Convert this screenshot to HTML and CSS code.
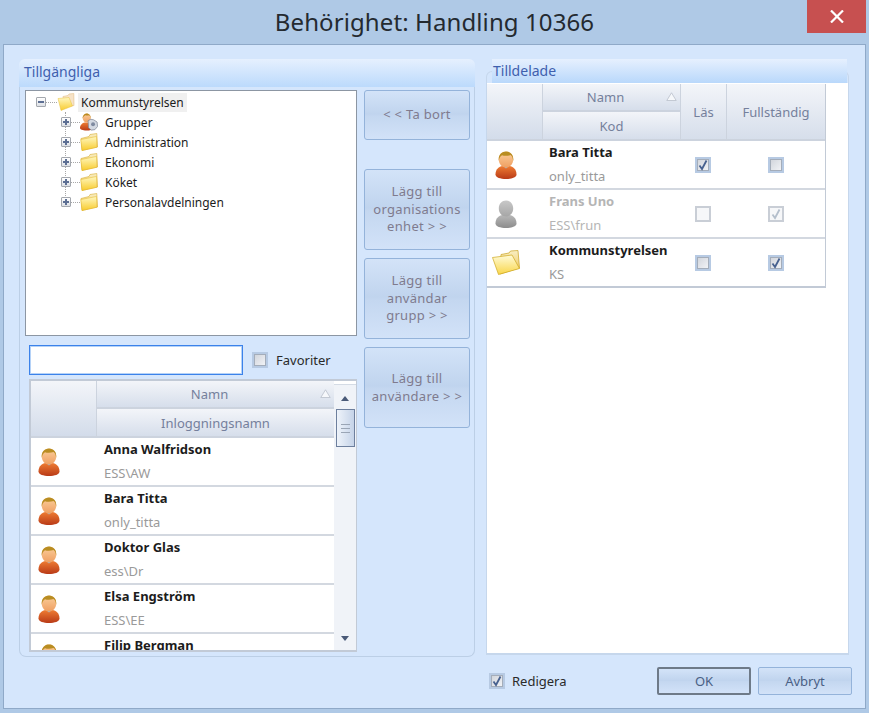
FILE: index.html
```html
<!DOCTYPE html>
<html lang="sv">
<head>
  <meta charset="UTF-8">
  <title>Behörighet: Handling 10366</title>
  <link rel="stylesheet" href="styles.css">
</head>
<body>
  <svg class="defs" width="0" height="0" aria-hidden="true">
    <defs>
      <linearGradient id="skin" x1="0" y1="0" x2="0" y2="1"><stop offset="0" stop-color="#fbcf9c"/><stop offset="1" stop-color="#ef9f62"/></linearGradient>
      <linearGradient id="shirt" x1="0" y1="0" x2="0" y2="1"><stop offset="0" stop-color="#ee7c33"/><stop offset="1" stop-color="#b93a17"/></linearGradient>
      <linearGradient id="greyhead" x1="0" y1="0" x2="0" y2="1"><stop offset="0" stop-color="#c8c8c8"/><stop offset="1" stop-color="#a6a6a6"/></linearGradient>
      <linearGradient id="greybody" x1="0" y1="0" x2="0" y2="1"><stop offset="0" stop-color="#b8b8b8"/><stop offset="1" stop-color="#8c8c8c"/></linearGradient>
      <linearGradient id="fold" x1="0" y1="0" x2="0" y2="1"><stop offset="0" stop-color="#fff8c0"/><stop offset="1" stop-color="#f8cb2e"/></linearGradient>
      <linearGradient id="foldside" x1="0" y1="0" x2="0" y2="1"><stop offset="0" stop-color="#fffbd8"/><stop offset="1" stop-color="#f9d64a"/></linearGradient>
      <linearGradient id="foldback" x1="0" y1="0" x2="0" y2="1"><stop offset="0" stop-color="#f9efc4"/><stop offset="1" stop-color="#ecc04a"/></linearGradient>
      <symbol id="person" viewBox="0 0 22 28">
        <path d="M.5 23.500C.5 18 4 15.500 7.500 15h7c3.500.5 7 3 7 8.500 0 3-5 4.500-10.500 4.500S.5 26.500.5 23.500z" fill="url(#shirt)"/>
        <path d="M8 15l3 2.500 3-2.500v-1H8z" fill="#9db4c4"/>
        <path d="M3.800 8.500C3.800 3.500 7 .5 11 .5s7.200 3 7.200 8c0 4.500-3.200 8-7.200 8s-7.200-3.500-7.200-8z" fill="url(#skin)"/>
        <path d="M3.800 10C3 4 6.500.5 11 .5S19 4 18.200 10c-.4-3-1-5-2.700-6-2.500 1-6.500 1-8.500.2C5 5.200 4.200 7 3.800 10z" fill="#b98d22"/>
      </symbol>
      <symbol id="person-grey" viewBox="0 0 22 28">
        <path d="M.5 23.500C.5 18 4 15.500 7.500 15h7c3.500.5 7 3 7 8.500 0 3-5 4.500-10.500 4.500S.5 26.500.5 23.500z" fill="url(#greybody)"/>
        <path d="M3.800 8.500C3.800 3.500 7 .5 11 .5s7.200 3 7.200 8c0 4.500-3.200 8-7.200 8s-7.200-3.500-7.200-8z" fill="url(#greyhead)"/>
      </symbol>
      <symbol id="folder" viewBox="0 0 18 18">
        <path d="M1 5.500L9 3.500 10 1.500 16.800.5 17.500 14 2 17.500z" fill="url(#foldback)" stroke="#d9ad32" stroke-width=".6"/>
        <path d="M.8 6.500L16.500 3.500 17 14.200 2 17.500z" fill="url(#fold)" stroke="#e3b62e" stroke-width=".5"/>
      </symbol>
      <symbol id="folder-open" viewBox="0 0 18 18">
        <path d="M6 3.500L11 2.500 12 1 16.800.5 17 12.500 7 14z" fill="#f7e3c8" stroke="#e3c08a" stroke-width=".6"/>
        <path d="M1 5.500L12 4.500 15.500 13 4 17.500z" fill="url(#fold)" stroke="#e8c040" stroke-width=".5"/>
      </symbol>
      <symbol id="folder-large" viewBox="0 0 28 25">
        <path d="M9 4.500L17 3 18.500 1 26 .5 27.500 18 8 24z" fill="url(#foldback)" stroke="#c9a21e" stroke-width=".7"/>
        <path d="M.5 7.500L20 5 27.500 18.500 6.500 24.500z" fill="url(#foldside)" stroke="#cfa71f" stroke-width=".7"/>
      </symbol>
      <symbol id="group" viewBox="0 0 20 20">
        <path d="M0 16.500C0 13 3 11 5 10.500h5c3 .5 4 3 4 5.500 0 2.500-3 3.500-7 3.500s-7-1-7-3z" fill="url(#shirt)"/>
        <path d="M3 5.500C3 2.500 5 .5 7.500.5S12 2.500 12 5.500s-2 5-4.500 5S3 8.500 3 5.500z" fill="url(#skin)"/>
        <path d="M3 6C2.700 3 5 .5 7.500.5S12.300 3 12 6c-.5-2-1-3-2-3.500-1 .5-3 .5-4 0C5 3 3.500 4 3 6z" fill="#b98a20"/>
        <path d="M9 8.500l3-1.500 3 .5 4 2.500.5 5-3 3.500-4 .5-3-2.500z" fill="#d4d9e2" stroke="#7d8595" stroke-width=".8"/>
        <circle cx="14.500" cy="12.500" r="2.200" fill="#7f8aa0"/>
      </symbol>
      <symbol id="tick" viewBox="0 0 12 12">
        <path d="M2.500 6.500L5 10l4.500-8.500" fill="none" stroke="currentColor" stroke-width="1.800"/>
      </symbol>
      <symbol id="sort" viewBox="0 0 11 9">
        <path d="M5.500.8L10.200 8.500H.8z" fill="#f6f8fb" stroke="#b9bfca" stroke-width=".8"/>
      </symbol>
    </defs>
  </svg>

  <div class="window">
    <header class="titlebar">
      <span></span>
      <h1 class="title">Behörighet: Handling 10366</h1>
      <button class="close" aria-label="Stäng">
        <svg width="14" height="13" viewBox="0 0 14 13"><path d="M1 .5l12 12M13 .5l-12 12" stroke="#fff" stroke-width="2.200" fill="none"/></svg>
      </button>
    </header>

    <main class="panel">
      <div class="columns">
        <section class="group">
          <h2 class="group-head">Tillgängliga</h2>
          <div class="group-body">
            <div class="pickers">
              <div class="tree">
                <div class="tree-row tree-root">
                  <span class="expander minus"></span>
                  <span class="dots"></span>
                  <svg class="tree-icon"><use href="#folder-open"/></svg>
                  <span class="tree-label selected">Kommunstyrelsen</span>
                </div>
                <div class="tree-kids">
                  <div class="tree-row">
                    <span class="expander plus"></span>
                    <span class="dots"></span>
                    <svg class="tree-icon"><use href="#group"/></svg>
                    <span class="tree-label">Grupper</span>
                  </div>
                  <div class="tree-row">
                    <span class="expander plus"></span>
                    <span class="dots"></span>
                    <svg class="tree-icon"><use href="#folder"/></svg>
                    <span class="tree-label">Administration</span>
                  </div>
                  <div class="tree-row">
                    <span class="expander plus"></span>
                    <span class="dots"></span>
                    <svg class="tree-icon"><use href="#folder"/></svg>
                    <span class="tree-label">Ekonomi</span>
                  </div>
                  <div class="tree-row">
                    <span class="expander plus"></span>
                    <span class="dots"></span>
                    <svg class="tree-icon"><use href="#folder"/></svg>
                    <span class="tree-label">Köket</span>
                  </div>
                  <div class="tree-row">
                    <span class="expander plus"></span>
                    <span class="dots"></span>
                    <svg class="tree-icon"><use href="#folder"/></svg>
                    <span class="tree-label">Personalavdelningen</span>
                  </div>
                </div>
              </div>

              <div class="search-row">
                <input class="search" type="text">
                <span class="check"></span>
                <span class="search-label">Favoriter</span>
              </div>

              <div class="user-grid">
                <div class="user-main">
                  <div class="grid-head">
                    <div class="head-icon"></div>
                    <div class="head-cell sorted">Namn<svg class="sort-mark"><use href="#sort"/></svg></div>
                    <div class="head-cell">Inloggningsnamn</div>
                  </div>
                  <div class="user-list">
                    <div class="user-row">
                      <div class="icon-cell"><svg class="person"><use href="#person"/></svg></div>
                      <div class="text-cell"><b>Anna Walfridson</b><span>ESS\AW</span></div>
                    </div>
                    <div class="user-row">
                      <div class="icon-cell"><svg class="person"><use href="#person"/></svg></div>
                      <div class="text-cell"><b>Bara Titta</b><span>only_titta</span></div>
                    </div>
                    <div class="user-row">
                      <div class="icon-cell"><svg class="person"><use href="#person"/></svg></div>
                      <div class="text-cell"><b>Doktor Glas</b><span>ess\Dr</span></div>
                    </div>
                    <div class="user-row">
                      <div class="icon-cell"><svg class="person"><use href="#person"/></svg></div>
                      <div class="text-cell"><b>Elsa Engström</b><span>ESS\EE</span></div>
                    </div>
                    <div class="user-row">
                      <div class="icon-cell"><svg class="person"><use href="#person"/></svg></div>
                      <div class="text-cell"><b>Filip Bergman</b></div>
                    </div>
                  </div>
                </div>
                <div class="scrollbar">
                  <div class="scroll-cap"></div>
                  <div class="scroll-track">
                    <span class="arrow up"></span>
                    <div class="thumb"><span class="grip"></span></div>
                    <span class="arrow down"></span>
                  </div>
                </div>
              </div>
            </div>

            <div class="actions">
              <button class="action action-remove">&lt; &lt; Ta bort</button>
              <button class="action action-tall">Lägg till<br>organisations<br>enhet &gt; &gt;</button>
              <button class="action action-tall">Lägg till<br>användar<br>grupp &gt; &gt;</button>
              <button class="action action-tall">Lägg till<br>användare &gt; &gt;</button>
            </div>
          </div>
        </section>

        <section class="assigned">
          <h2 class="assigned-head">Tilldelade</h2>
          <div class="assigned-body">
            <div class="assigned-grid">
              <div class="assigned-top">
                <div class="head-icon"></div>
                <div class="head-cell sorted">Namn<svg class="sort-mark"><use href="#sort"/></svg></div>
                <div class="head-cell">Kod</div>
                <div class="head-tall head-read">Läs</div>
                <div class="head-tall head-full">Fullständig</div>
              </div>
              <div class="assigned-row">
                <div class="icon-cell"><svg class="person"><use href="#person"/></svg></div>
                <div class="text-cell"><b>Bara Titta</b><span>only_titta</span></div>
                <div class="check-cell"><span class="check on"><svg><use href="#tick"/></svg></span></div>
                <div class="check-cell"><span class="check"></span></div>
              </div>
              <div class="assigned-row inactive">
                <div class="icon-cell"><svg class="person"><use href="#person-grey"/></svg></div>
                <div class="text-cell"><b>Frans Uno</b><span>ESS\frun</span></div>
                <div class="check-cell"><span class="check off"></span></div>
                <div class="check-cell"><span class="check off on"><svg><use href="#tick"/></svg></span></div>
              </div>
              <div class="assigned-row">
                <div class="icon-cell"><svg class="folder-large"><use href="#folder-large"/></svg></div>
                <div class="text-cell"><b>Kommunstyrelsen</b><span>KS</span></div>
                <div class="check-cell"><span class="check"></span></div>
                <div class="check-cell"><span class="check on"><svg><use href="#tick"/></svg></span></div>
              </div>
            </div>
          </div>
        </section>
      </div>

      <footer class="footer">
        <span class="check on edit-check"><svg><use href="#tick"/></svg></span>
        <span class="edit-label">Redigera</span>
        <button class="dialog-btn default">OK</button>
        <button class="dialog-btn">Avbryt</button>
      </footer>
    </main>
  </div>
</body>
</html>
```

FILE: styles.css
```css
* {
  box-sizing: border-box;
}

html, body {
  margin: 0;
  height: 100%;
}

body {
  background-color: #afc9e6;
  font-family: "Noto Sans", "Open Sans", sans-serif;
  font-size: 13px;
  color: #1c1c1c;
  overflow: hidden;
}

.defs {
  display: block;
  height: 0;
}

.window {
  width: 869px;
  height: 713px;
  display: flex;
  flex-direction: column;
}

/* title bar */
.titlebar {
  height: 44px;
  flex: none;
  display: grid;
  grid-template-columns: 1fr auto 1fr;
  align-items: start;
}

.title {
  margin: 5px 0 0;
  font-size: 24px;
  letter-spacing: .1px;
  line-height: 34px;
  font-weight: 400;
  color: #242a30;
}

.close {
  justify-self: end;
  width: 59px;
  height: 33px;
  margin-right: 3px;
  border: 0;
  padding: 0;
  background-color: #c75050;
  display: flex;
  align-items: center;
  justify-content: center;
}

.panel {
  width: 863px;
  height: 665px;
  margin-left: 3px;
  padding: 14px 13px 0 15px;
  background-color: #d5e6fc;
  border: 1px solid #8fa9c8;
}

.columns {
  display: flex;
  gap: 11px;
  height: 598px;
}

/* left group */
.group {
  width: 456px;
  display: flex;
  flex-direction: column;
}

.group-head {
  margin: 0;
  height: 28px;
  flex: none;
  padding: 2px 0 0 5px;
  font-size: 14px;
  line-height: 22px;
  font-weight: 400;
  color: #3f5fae;
  border-radius: 6px 6px 0 0;
  background: linear-gradient(#e6f0fe, #bcdafc);
}

.group-body {
  flex: 1;
  display: flex;
  gap: 7px;
  padding: 3px 0 0 5px;
  border: 1px solid #bccfe6;
  border-top: 0;
  border-radius: 0 0 7px 7px;
}

.pickers {
  width: 332px;
}

.tree {
  height: 246px;
  background-color: #fff;
  border: 1px solid #8c96a3;
  padding: 1px 0 0 10px;
  font-size: 12px;
}

.tree-row {
  height: 20px;
  display: flex;
  align-items: center;
}

.tree-kids {
  position: relative;
  padding-left: 25px;
}

.tree-kids::before {
  content: "";
  position: absolute;
  left: 29px;
  top: 0;
  height: 90px;
  border-left: 1px dotted #a8a8a8;
}

.expander {
  position: relative;
  width: 10px;
  height: 10px;
  flex: none;
  border: 1px solid #a3a7ad;
  border-radius: 1px;
  background: linear-gradient(#fff, #dde0e5);
}

.expander::before {
  content: "";
  position: absolute;
  left: 1px;
  top: 3px;
  width: 6px;
  height: 2px;
  background-color: #5d6f93;
}

.plus::after {
  content: "";
  position: absolute;
  left: 3px;
  top: 1px;
  width: 2px;
  height: 6px;
  background-color: #5d6f93;
}

.dots {
  width: 9px;
  flex: none;
  border-top: 1px dotted #a8a8a8;
}

.tree-root .dots {
  width: 11px;
}

.tree-icon {
  width: 18px;
  height: 18px;
  flex: none;
}

.tree-label {
  margin-left: 5px;
  padding: 0 2px;
  line-height: 19px;
  white-space: nowrap;
}

.tree-root .tree-label {
  margin-left: 3px;
  padding: 0 3px 0 3px;
}

.selected {
  background-color: #f0f0f0;
}

.search-row {
  display: flex;
  align-items: center;
  margin: 9px 0 4px 4px;
}

.search {
  width: 214px;
  height: 30px;
  border: 1px solid #3b82ea;
  box-shadow: inset 0 0 0 1px #b5d2f7;
  background-color: #fff;
  outline: 0;
}

.search-row .check {
  margin: 0 8px 0 9px;
}

.search-label {
  font-size: 13px;
  color: #2a2a2a;
}

/* checkboxes */
.check {
  display: inline-flex;
  width: 16px;
  height: 16px;
  flex: none;
  align-items: center;
  justify-content: center;
  color: #47618f;
  background: linear-gradient(135deg, #cfd3da, #f4f5f8);
  border: 2px solid #b7cae3;
  box-shadow: inset 0 0 0 1px #a4adba;
}

.check svg {
  width: 12px;
  height: 12px;
}

.check.off {
  color: #b4bfcc;
  background: #f6f7f9;
  border-color: #c9ced6;
  box-shadow: none;
}

/* grids */
.user-grid {
  display: flex;
  margin-left: 4px;
  width: 328px;
  height: 273px;
  border: 2px solid #c2cad6;
  border-right-width: 1px;
  overflow: hidden;
}

.user-main {
  width: 303px;
  flex: none;
  overflow: hidden;
}

.grid-head {
  display: grid;
  grid-template-columns: 66px 1fr;
  grid-template-rows: 28px 29px;
  height: 57px;
}

.head-icon {
  grid-row: 1 / 3;
  background: linear-gradient(#f3f5f9, #d3dcea);
  border-right: 1px solid #ccd3de;
  border-bottom: 2px solid #ccd3de;
}

.head-cell, .head-tall {
  display: flex;
  align-items: center;
  justify-content: center;
  color: #75809c;
  background: linear-gradient(#f3f5f9, #d6deeb);
  border-bottom: 2px solid #ccd3de;
}

.sorted {
  position: relative;
  padding-right: 12px;
}

.sort-mark {
  position: absolute;
  right: 3px;
  top: 8px;
  width: 11px;
  height: 9px;
}

.user-row {
  display: flex;
  height: 49px;
  background-color: #fff;
  border-bottom: 2px solid #d3d8e0;
}

.icon-cell {
  width: 66px;
  flex: none;
  display: flex;
  align-items: center;
  justify-content: center;
  padding-right: 30px;
}

.person {
  width: 22px;
  height: 28px;
}

.text-cell {
  display: flex;
  flex-direction: column;
  padding: 1px 0 0 7px;
  line-height: 20px;
  white-space: nowrap;
}

.text-cell span {
  margin-top: 4px;
  color: #9a9a9a;
}

.scrollbar {
  flex: 1;
  display: flex;
  flex-direction: column;
  background-color: #e9eff7;
}

.scroll-cap {
  height: 4px;
  background-color: #fff;
  border-bottom: 1px solid #d4dbe5;
}

.scroll-track {
  flex: 1;
  display: flex;
  flex-direction: column;
  align-items: center;
  padding-top: 11px;
  background-color: #f0f3f8;
}

.arrow {
  width: 0;
  height: 0;
  border-left: 4px solid transparent;
  border-right: 4px solid transparent;
}

.up {
  border-bottom: 5px solid #4a5a78;
}

.down {
  margin-top: auto;
  margin-bottom: 9px;
  border-top: 5px solid #4a5a78;
}

.thumb {
  width: 19px;
  height: 38px;
  margin-top: 8px;
  display: flex;
  align-items: center;
  justify-content: center;
  background: linear-gradient(90deg, #eef3fa, #c5d3e8);
  border: 1px solid #6d7f9d;
}

.grip {
  width: 9px;
  height: 9px;
  border-top: 1px solid #9aa5b5;
  border-bottom: 1px solid #9aa5b5;
  background: linear-gradient(#9aa5b5, #9aa5b5) center / 100% 1px no-repeat;
}

/* action buttons */
.actions {
  width: 106px;
  display: flex;
  flex-direction: column;
  gap: 8px;
}

.action {
  width: 106px;
  padding: 0;
  font-family: inherit;
  font-size: 13px;
  letter-spacing: .3px;
  line-height: 17.6px;
  color: #7f7b8e;
  border: 1px solid #94b3da;
  border-radius: 3px;
  background: linear-gradient(#d3e3f8, #c0d4ee 48%, #c4d7f0 52%, #d2e2f8);
}

.action-remove {
  height: 50px;
  margin-bottom: 21px;
}

.action-tall {
  height: 81px;
}

/* right column */
.assigned {
  position: relative;
  width: 363px;
  display: flex;
  flex-direction: column;
  height: 596px;
}

.assigned::before {
  content: "";
  position: absolute;
  left: 0;
  right: 0;
  top: 12px;
  height: 14px;
  border: 1px solid #c6d7ec;
  border-bottom: 0;
  border-radius: 6px 6px 0 0;
}

.assigned-head {
  position: relative;
  margin: 0 2px 0 6px;
  height: 24px;
  flex: none;
  padding-left: 1px;
  font-size: 14px;
  line-height: 24px;
  font-weight: 400;
  color: #3f5fae;
  background: linear-gradient(#e6f0fe, #b9d8fb);
}

.assigned-body {
  position: relative;
  flex: 1;
  padding: 1px 0 0;
  background-color: #fff;
  border: 1px solid #c6d7ec;
  border-top: 0;
  border-bottom-width: 2px;
}

.assigned-grid {
  width: 339px;
  border-bottom: 2px solid #c2cad6;
  border-right: 1px solid #c2cad6;
}

.assigned-top {
  display: grid;
  grid-template-columns: 56px 137px 46px 1fr;
  grid-template-rows: 28px 29px;
  height: 57px;
}

.head-tall {
  grid-row: 1 / 3;
  border-left: 1px solid #ccd3de;
}

.head-read {
  grid-column: 3;
  grid-row: 1 / 3;
}

.head-full {
  grid-column: 4;
  grid-row: 1 / 3;
}

.assigned-top .head-cell {
  grid-column: 2;
}

.assigned-row {
  display: grid;
  grid-template-columns: 56px 137px 46px 1fr;
  height: 49px;
  border-bottom: 2px solid #d3d8e0;
}

.assigned-row:last-child {
  border-bottom: 0;
  height: 47px;
}

.assigned-row .icon-cell {
  width: auto;
  padding-right: 19px;
}

.assigned-row .text-cell {
  padding-left: 6px;
}

.folder-large {
  width: 28px;
  height: 25px;
  flex: none;
}

.inactive .text-cell b, .inactive .text-cell span {
  color: #b5b5b5;
}

.check-cell {
  display: flex;
  align-items: center;
  justify-content: center;
}

/* footer */
.footer {
  display: flex;
  align-items: center;
  height: 28px;
  margin-top: 10px;
  padding-left: 470px;
}

.edit-check {
  margin-right: 7px;
}

.edit-label {
  color: #2a2a2a;
}

.dialog-btn {
  width: 94px;
  height: 28px;
  padding: 0;
  margin-left: 7px;
  font-family: inherit;
  font-size: 13px;
  color: #4a5f85;
  border: 1px solid #94b3da;
  border-radius: 2px;
  background: linear-gradient(#d3e3f8, #c0d4ee 48%, #c4d7f0 52%, #d2e2f8);
}

.default {
  margin-left: auto;
  border: 2px solid #6e7a88;
}
```
